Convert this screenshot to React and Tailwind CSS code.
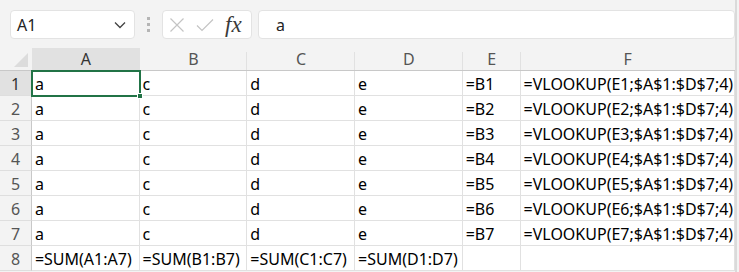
import React from 'react';

const COLS = [
  { id: 'A', w: 'w-[108px]' },
  { id: 'B', w: 'w-[108px]' },
  { id: 'C', w: 'w-[108px]' },
  { id: 'D', w: 'w-[108px]' },
  { id: 'E', w: 'w-[58px]' },
  { id: 'F', w: 'w-[215px]' },
];

const rows = [1, 2, 3, 4, 5, 6, 7].map(n => ['a', 'c', 'd', 'e', `=B${n}`, `=VLOOKUP(E${n};$A$1:$D$7;4)`]);
rows.push(['=SUM(A1:A7)', '=SUM(B1:B7)', '=SUM(C1:C7)', '=SUM(D1:D7)', '', '']);

const FONT = { fontFamily: "'Segoe UI','Noto Sans','Open Sans',sans-serif" };

function Toolbar() {
  return (
    <div className="h-[48px] flex items-start pt-[10px] pl-[10px] gap-0">
      <div className="w-[125px] h-[29px] bg-white rounded-[4px] border border-[#e3e3e3] flex items-center justify-between pl-[6px] pr-[8px]">
        <span className="text-[16px] text-[#242424]">A1</span>
        <svg width="12" height="8" viewBox="0 0 12 8"><path d="M1 1.5 L6 6.5 L11 1.5" fill="none" stroke="#424242" strokeWidth="1.3"/></svg>
      </div>
      <div className="w-[27px] h-[29px] flex flex-col items-center justify-center gap-[3px]">
        <span className="w-[3px] h-[3px] bg-[#b5b5b5]"/>
        <span className="w-[3px] h-[3px] bg-[#b5b5b5]"/>
        <span className="w-[3px] h-[3px] bg-[#b5b5b5]"/>
      </div>
      <div className="w-[90px] h-[29px] bg-white rounded-[4px] border border-[#e3e3e3] flex items-center pl-[6px] gap-[11px]">
        <svg width="16" height="16" viewBox="0 0 16 16"><path d="M1.5 1.5 L14.5 14.5 M14.5 1.5 L1.5 14.5" stroke="#c4c4c4" strokeWidth="1.2"/></svg>
        <svg width="18" height="14" viewBox="0 0 18 14"><path d="M1 7.5 L6 12.5 L17 1.5" fill="none" stroke="#c4c4c4" strokeWidth="1.2"/></svg>
        <span className="text-[23px] italic text-[#3a3a3a] leading-none" style={{ fontFamily: "'Liberation Serif',serif" }}>fx</span>
      </div>
      <div className="ml-[6px] flex-1 h-[29px] bg-white rounded-[4px] border border-[#e3e3e3] flex items-center pl-[17px]">
        <span className="text-[16px] text-[#242424]">a</span>
      </div>
    </div>
  );
}

export default function App() {
  return (
    <div className="w-[739px] h-[272px] bg-[#f3f3f3] overflow-hidden relative" style={FONT}>
      <div className="w-[737px] border-r-2 border-[#dadada] h-full">
        <Toolbar/>
        <div className="flex h-[23px] border-b border-[#c8c8c8]">
          <div className="w-[32px] relative">
            <svg className="absolute right-[4px] bottom-[3px]" width="14" height="14" viewBox="0 0 14 14"><path d="M14 0 L14 14 L0 14 Z" fill="#dcdcdc"/></svg>
          </div>
          {COLS.map((c, i) => (
            <div key={c.id} className={`${c.w} flex items-center justify-center text-[16px] relative ${i === 0 ? 'bg-[#e1e1e1] text-[#333]' : 'text-[#555]'}`}>
              {c.id}
              {i < COLS.length - 1 && <span className="absolute right-0 top-[4px] bottom-0 w-px bg-[#e1e1e1]"/>}
            </div>
          ))}
        </div>
        <div className="relative">
          {rows.map((r, ri) => (
            <div key={ri} className="flex h-[25px]">
              <div className={`w-[32px] flex items-center justify-center pt-[2px] text-[16px] border-b border-[#dedede] border-r border-r-[#c8c8c8] ${ri === 0 ? 'bg-[#e1e1e1] text-[#333]' : 'text-[#555]'}`}>{ri + 1}</div>
              {r.map((v, ci) => (
                <div key={ci} className={`${COLS[ci].w} bg-white border-b border-r border-[#e1e1e1] flex items-center pt-[2px] pl-[3px] text-[16px] text-black whitespace-nowrap overflow-visible`}>{v}</div>
              ))}
            </div>
          ))}
          <div className="absolute left-[31px] top-[-1px] w-[110px] h-[27px] border-2 border-[#217346]">
            <span className="absolute right-[-4px] bottom-[-4px] w-[6px] h-[6px] bg-[#217346] border border-white"/>
          </div>
        </div>
      </div>
    </div>
  );
}
